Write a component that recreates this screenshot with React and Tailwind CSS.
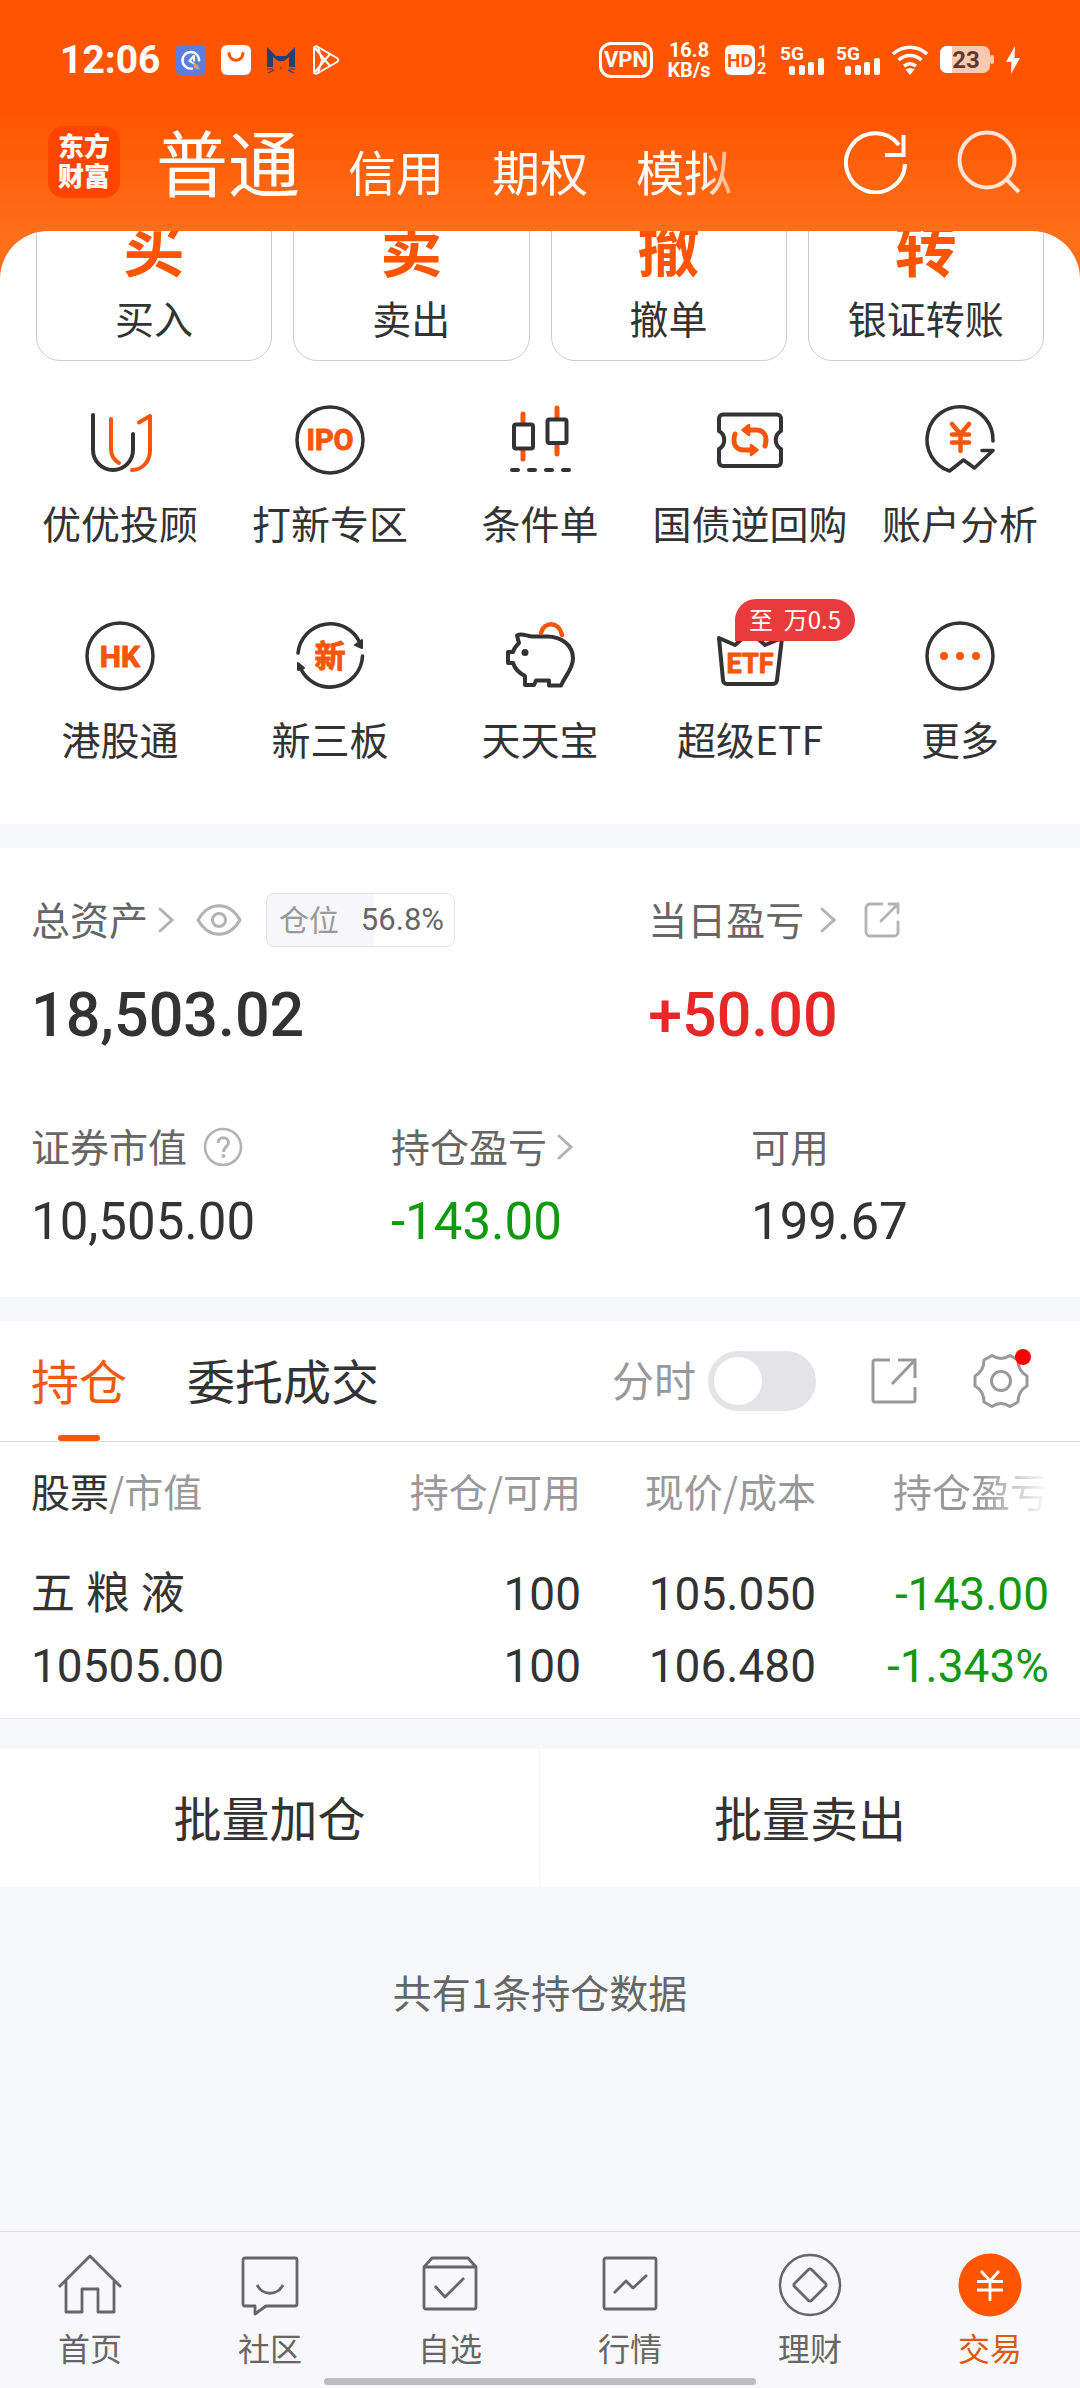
import { useState } from "react";
import clsx from "clsx";

const DARK = "#333333";
const ORANGE = "#f9560a";

const MODES = ["信用", "期权", "模拟"];

const ACTIONS = [
  { glyph: "买", label: "买入" },
  { glyph: "卖", label: "卖出" },
  { glyph: "撤", label: "撤单" },
  { glyph: "转", label: "银证转账" },
];

const POSITIONS = [
  {
    name: "五 粮 液",
    value: "10505.00",
    held: "100",
    usable: "100",
    price: "105.050",
    cost: "106.480",
    profit: "-143.00",
    rate: "-1.343%",
  },
];

/* ---------- status bar ---------- */

const Signal = () => (
  <svg className="h-8 w-11 overflow-visible" viewBox="0 0 44 32" fill="#fff">
    <text x="0" y="16" fontSize="19" fontWeight="700">5G</text>
    <rect x="9" y="22" width="6" height="9" rx="2" />
    <rect x="19" y="21" width="6" height="10" rx="2" />
    <rect x="28" y="18" width="6" height="13" rx="2" />
    <rect x="38" y="14" width="6" height="17" rx="2" />
  </svg>
);

const StatusBar = () => (
  <div className="flex h-[119px] items-center justify-between px-[60px] font-[Roboto] text-white">
    <div className="flex items-center gap-[15px]">
      <span className="text-[39px] leading-[48px] font-bold">12:06</span>
      <svg className="h-[30px] w-[30px]" viewBox="0 0 30 30" fill="none">
        <rect width="30" height="30" rx="5" fill="#5b7fe0" />
        <path d="M17 23.300a8.300 8.300 0 1 1 6-7" stroke="#fff" strokeWidth="2.400" />
        <path d="M18 10.500l-4.500 5.500 5 3M18 10.500v6" stroke="#fff" strokeWidth="2" />
        <path d="M17 18l5 2 1.500 4.500-5-1.500z" fill="#d9a066" />
      </svg>
      <svg className="h-[30px] w-[30px]" viewBox="0 0 30 30" fill="none">
        <rect width="30" height="30" rx="6" fill="#fff" />
        <path d="M8 8.500c1 9 13 9 14 0" stroke="#ff5500" strokeWidth="3" strokeLinecap="round" />
      </svg>
      <svg className="h-[30px] w-[30px]" viewBox="0 0 30 30" fill="#27406f">
        <path d="M1 2l9 9h10l9-9v20h-6V12l-5 4h-6l-5-4v10H1z" />
        <path d="M1 24h6M2 28l6-3M29 24h-6M28 28l-6-3M14 23h2" stroke="#27406f" strokeWidth="1.200" />
      </svg>
      <svg className="h-[30px] w-[30px]" viewBox="0 0 30 30" fill="none" stroke="#fff" strokeWidth="2" strokeLinejoin="round">
        <path d="M3 2.500v25q1 2 4 0.500l19-11q2.500-2 0-4L7 2q-3-1.500-4 0.500z" />
        <path d="M4 3l15 18M4 27L19 9M7 2l4 13-4 13" />
      </svg>
    </div>
    <div className="flex items-center gap-3">
      <span className="flex h-9 w-[54px] items-center justify-center rounded-xl border-3 border-white text-[22px] leading-6 font-bold">
        VPN
      </span>
      <span className="flex w-[48px] flex-col items-center text-[20px] leading-5 font-bold">
        <span>16.8</span>
        <span>KB/s</span>
      </span>
      <svg className="h-8 w-[43px] overflow-visible" viewBox="0 0 43 32" fill="#fff">
        <rect y="1" width="30" height="30" rx="6" />
        <text x="15" y="23" fontSize="19" fontWeight="700" textAnchor="middle" fill="#ff5500">HD</text>
        <text x="33" y="13" fontSize="16" fontWeight="700">1</text>
        <text x="32" y="30" fontSize="16" fontWeight="700">2</text>
      </svg>
      <Signal />
      <Signal />
      <svg className="h-8 w-9" viewBox="0 0 36 32" fill="none" stroke="#fff" strokeWidth="3.600">
        <path d="M1 10c10-9 24-9 34 0M6.500 16c7-6 16-6 23 0M12 22c4-3 8-3 12 0" />
        <path d="M13.500 25.500q4.500-3 9 0L18 31z" fill="#fff" stroke="none" />
      </svg>
      <svg className="h-7 w-[54px] overflow-visible" viewBox="0 0 54 28">
        <rect width="50" height="27" rx="7" fill="#ffc9b0" />
        <rect x="50" y="9" width="4" height="9" rx="2" fill="#ffc9b0" />
        <path d="M7 0h5v27H7a7 7 0 0 1-7-7V7a7 7 0 0 1 7-7z" fill="#fff" />
        <text x="26" y="22" fontSize="24" fontWeight="700" textAnchor="middle" fill="#5b3a2e">23</text>
      </svg>
      <svg className="h-7 w-3.5" viewBox="0 0 14 28" fill="#fff">
        <path d="M9 0L0 16h5.500L5 28l9-16H8.500z" />
      </svg>
    </div>
  </div>
);

/* ---------- shortcut icons, 72x72 ---------- */

const Shape = ({ children }) => (
  <svg
    className="h-[72px] w-[72px] overflow-visible"
    viewBox="0 0 72 72"
    fill="none"
    stroke={DARK}
    strokeWidth="4"
    strokeLinecap="round"
    strokeLinejoin="round"
  >
    {children}
  </svg>
);

const IconText = ({ y, size, children }) => (
  <text
    x="36"
    y={y}
    fontSize={size}
    fontWeight="700"
    textAnchor="middle"
    fill={ORANGE}
    stroke={ORANGE}
    strokeWidth="1"
    className="font-[Roboto,'Noto_Sans_CJK_SC',sans-serif]"
  >
    {children}
  </text>
);

const AdvisorIcon = () => (
  <Shape>
    <path d="M9 11v35a20 20 0 0 0 40 0V30" />
    <path d="M27 15v30c0 7 3 11 8 14M55 18.500L66 12v34c0 12-8 20-18 20" stroke={ORANGE} />
  </Shape>
);

const IpoIcon = () => (
  <Shape>
    <circle cx="36" cy="36" r="33" strokeWidth="3.500" />
    <IconText y="46" size="29">IPO</IconText>
  </Shape>
);

const CandleIcon = () => (
  <Shape>
    <path d="M19 10v8M19 46v9M53 4v9M53 41v9" stroke={ORANGE} strokeWidth="5" />
    <rect x="10" y="20.500" width="19" height="24" rx="2" />
    <rect x="43.500" y="15.500" width="19" height="23.500" rx="2" />
    <path d="M8 66h6M25 66h6M42 66h6M59 66h6" />
  </Shape>
);

const TreasuryIcon = () => (
  <Shape>
    <path d="M9 10.500h54a4 4 0 0 1 4 4V27c-7 4-7 14 0 18v13a4 4 0 0 1-4 4H9a4 4 0 0 1-4-4V45c7-4 7-14 0-18V14.500a4 4 0 0 1 4-4z" />
    <g stroke={ORANGE} strokeWidth="5">
      <path d="M36 26h6c8 0 12 6 9 16M36 46h-6c-8 0-12-6-9-16" />
      <path d="M35 21l-6.500 5 6.500 5zM37 41l6.500 5-6.500 5z" fill={ORANGE} strokeWidth="2.500" />
    </g>
  </Shape>
);

const AnalysisIcon = () => (
  <Shape>
    <path d="M69 37A33 33 0 1 0 25.500 67L39.500 56l11 8L69 46.500H58" strokeWidth="3.600" />
    <path d="M28 20l8.500 10L45 20M28 30.500h17M28 38.500h17M36.500 30v17" stroke={ORANGE} strokeWidth="4.500" />
  </Shape>
);

const HkIcon = () => (
  <Shape>
    <circle cx="36" cy="36" r="33" strokeWidth="3.500" />
    <IconText y="47" size="30">HK</IconText>
  </Shape>
);

const NewThirdIcon = () => (
  <Shape>
    <path d="M4 33A32.500 32.500 0 0 1 66 23M68.500 36A32.500 32.500 0 0 1 6 47" strokeWidth="3.600" />
    <path d="M61 25l7-5v8zM4 43v7l6-2z" fill={DARK} strokeWidth="2" />
    <IconText y="47" size="31">新</IconText>
  </Shape>
);

const PiggyIcon = () => (
  <Shape>
    <path d="M13 15.500c5-3 10 1 16 1h14c15 0 26 9 26 22 0 10-7 16-12 27H45v-5H32l-2 4.500h-9V56c-6-3-10-7-12-13H4V32h5c1-4 3-6 6-9z" />
    <path d="M37 13c3-12 18-12 21 2" stroke={ORANGE} strokeWidth="4.500" />
    <circle cx="21" cy="32.500" r="3.500" fill={DARK} stroke="none" />
  </Shape>
);

const EtfIcon = () => (
  <Shape>
    <path d="M5 18l16 7 15-13 15 13 17-7-5 42a4 4 0 0 1-4 4H13a4 4 0 0 1-4-4z" />
    <IconText y="53" size="27">ETF</IconText>
  </Shape>
);

const MoreIcon = () => (
  <Shape>
    <circle cx="36" cy="36" r="33" strokeWidth="3.500" />
    <g fill={ORANGE} stroke="none">
      <circle cx="20" cy="36" r="4" />
      <circle cx="36" cy="36" r="4" />
      <circle cx="52" cy="36" r="4" />
    </g>
  </Shape>
);

const SHORTCUTS = [
  { label: "优优投顾", Icon: AdvisorIcon },
  { label: "打新专区", Icon: IpoIcon },
  { label: "条件单", Icon: CandleIcon },
  { label: "国债逆回购", Icon: TreasuryIcon },
  { label: "账户分析", Icon: AnalysisIcon },
  { label: "港股通", Icon: HkIcon },
  { label: "新三板", Icon: NewThirdIcon },
  { label: "天天宝", Icon: PiggyIcon },
  { label: "超级ETF", Icon: EtfIcon, badge: "至  万0.5" },
  { label: "更多", Icon: MoreIcon },
];

/* ---------- small icons ---------- */

const Chevron = () => (
  <svg className="h-[26px] w-4" viewBox="0 0 16 26" fill="none" stroke="#b3b3b3" strokeWidth="3" strokeLinecap="round">
    <path d="M2 2l12 11L2 24" />
  </svg>
);

const EyeIcon = () => (
  <svg className="h-8 w-[46px]" viewBox="0 0 46 32" fill="none" stroke="#b3b3b3" strokeWidth="3">
    <path d="M2 16C13-3 33-3 44 16 33 35 13 35 2 16z" strokeLinejoin="round" />
    <circle cx="23" cy="16" r="6.500" />
  </svg>
);

const ShareIcon = () => (
  <svg className="h-9 w-9" viewBox="0 0 36 36" fill="none" stroke="#b3b3b3" strokeWidth="2.800" strokeLinecap="round">
    <path d="M18 2H6a4 4 0 0 0-4 4v24a4 4 0 0 0 4 4h24a4 4 0 0 0 4-4V20" />
    <path d="M25 2h9v9M33.500 2.500L17 19" />
  </svg>
);

const ExportIcon = () => (
  <svg className="h-12 w-12" viewBox="0 0 48 48" fill="none" stroke="#999" strokeWidth="3">
    <path d="M20 3H5a2 2 0 0 0-2 2v38a2 2 0 0 0 2 2h38a2 2 0 0 0 2-2V30M45 21V3H28" />
    <path d="M45 3L22 27" />
  </svg>
);

const GearIcon = () => (
  <svg className="h-14 w-14" viewBox="0 0 56 56" fill="none" stroke="#999" strokeWidth="3" strokeLinejoin="round">
    <path d="M19 2.500q9 6 18 0l8 4.500q0 11 9 16v10q-9 5-9 16l-8 4.500q-9-6-18 0l-8-4.500q0-11-9-16V23q9-5 9-16z" />
    <circle cx="28" cy="28" r="9.500" />
  </svg>
);

/* ---------- bottom tabs, 64x64 ---------- */

const NavShape = ({ children }) => (
  <svg
    className="h-16 w-16"
    viewBox="0 0 64 64"
    fill="none"
    stroke="#666"
    strokeWidth="2.800"
    strokeLinejoin="round"
  >
    {children}
  </svg>
);

const NAV = [
  {
    label: "首页",
    icon: <path d="M1 34L32 3l31 31M8 28v31h16V36h16v23h16V28" />,
  },
  {
    label: "社区",
    icon: (
      <>
        <path d="M7 5h50a2 2 0 0 1 2 2v44a2 2 0 0 1-2 2H28l-11 8v-8H7a2 2 0 0 1-2-2V7a2 2 0 0 1 2-2z" />
        <path d="M19 32c6 11 20 11 26 0" />
      </>
    ),
  },
  {
    label: "自选",
    icon: (
      <>
        <path d="M6 14v40a2 2 0 0 0 2 2h48a2 2 0 0 0 2-2V14l-8-9H14zM6 14h52" />
        <path d="M17 33l10 11 19-19" />
      </>
    ),
  },
  {
    label: "行情",
    icon: (
      <>
        <rect x="6" y="5" width="52" height="51" rx="2" />
        <path d="M16 40l12-12 7 7 14-13" />
      </>
    ),
  },
  {
    label: "理财",
    icon: (
      <>
        <circle cx="32" cy="32" r="30" strokeWidth="2.500" />
        <path d="M30.500 16.500a2 2 0 0 1 3 0l14 14a2 2 0 0 1 0 3l-14 14a2 2 0 0 1-3 0l-14-14a2 2 0 0 1 0-3z" />
      </>
    ),
  },
  {
    label: "交易",
    active: true,
    icon: (
      <>
        <circle cx="32" cy="32" r="31.500" fill="#ff5500" stroke="none" />
        <path d="M23 18l9 10 9-10M19 28.500h26M19 37h26M32 28v20" stroke="#fff" />
      </>
    ),
  },
];

/* ---------- sections ---------- */

const TopBar = () => (
  <header className="flex h-[90px] items-center pr-[60px] pl-12">
    <div className="mb-1 flex h-[72px] w-[72px] flex-col items-center justify-center rounded-2xl bg-[#ff4500] pb-1 text-[26px] leading-[30px] font-black text-white">
      <span>东方</span>
      <span>财富</span>
    </div>
    <nav className="ml-9 flex flex-1 items-baseline gap-12 overflow-hidden pb-2 text-white [mask-image:linear-gradient(to_right,black_calc(100%-54px),transparent)]">
      <button className="text-[72px] leading-[90px]">普通</button>
      {MODES.map((mode) => (
        <button key={mode} className="shrink-0 text-[48px] leading-[60px]">
          {mode}
        </button>
      ))}
    </nav>
    <div className="mb-1 ml-[88px] flex gap-12">
      <button aria-label="刷新">
        <svg className="h-16 w-16" viewBox="0 0 64 64" fill="none" stroke="#fff" strokeWidth="4">
          <path d="M61 34A29.500 29.500 0 1 1 55 15" />
          <path d="M59.500 5v20H41" />
        </svg>
      </button>
      <button aria-label="搜索">
        <svg className="h-16 w-16" viewBox="0 0 64 64" fill="none" stroke="#ffe3d3" strokeWidth="4">
          <circle cx="31" cy="30" r="27.500" />
          <path d="M50 49l13 13" />
        </svg>
      </button>
    </div>
  </header>
);

const Shortcuts = () => (
  <section className="mt-[22px] overflow-hidden rounded-t-[48px] bg-white pb-[62px]">
    {/* first row is scrolled partly under the header */}
    <div className="-mt-[60px] grid grid-cols-4 gap-[21px] px-9">
      {ACTIONS.map(({ glyph, label }) => (
        <button
          key={label}
          className="flex flex-col items-center gap-4 rounded-3xl border border-[#cccccc] pt-[41px] pb-[19px]"
        >
          <span className="text-[62px] leading-[64px] font-bold text-[#ff5500]">{glyph}</span>
          <span className="text-[39px] leading-[48px]">{label}</span>
        </button>
      ))}
    </div>
    <div className="mt-[43px] grid grid-cols-5 gap-y-[74px] px-[15px]">
      {SHORTCUTS.map(({ label, Icon, badge }) => (
        <button key={label} className="flex flex-col items-center gap-[22px]">
          <span className="relative">
            <Icon />
            {badge && (
              <span className="absolute -top-[21px] left-[21px] flex h-[42px] w-[120px] items-center justify-center rounded-full rounded-bl-none bg-[#e93b3b] pb-0.5 text-[24px] leading-[30px] whitespace-pre text-white">
                {badge}
              </span>
            )}
          </span>
          <span className="text-[39px] leading-[48px] whitespace-nowrap">{label}</span>
        </button>
      ))}
    </div>
  </section>
);

const Assets = () => (
  <section className="mt-6 bg-white py-[45px] text-[39px] leading-[48px] text-[#666666]">
    <div className="grid grid-cols-[4fr_3fr]">
      <div className="pl-[31px]">
        <div className="flex h-[54px] items-center">
          <span className="mr-2.5 pb-1">总资产</span>
          <Chevron />
          <button className="ml-[22px]" aria-label="隐藏金额">
            <EyeIcon />
          </button>
          <span className="ml-6 flex h-[54px] w-[189px] items-center justify-between rounded-lg border border-[#e4e4e7] bg-[linear-gradient(to_right,#f7f7fa_57%,white_57%)] pr-2.5 pl-3 text-[30px] leading-9">
            <span className="pb-1 text-[#999999]">仓位</span>
            <span className="font-[Roboto] text-[31px]">56.8%</span>
          </span>
        </div>
        <p className="mt-[32px] font-[Roboto] text-[61px] leading-[72px] font-medium text-[#333333]">18,503.02</p>
      </div>
      <div className="pl-[31px]">
        <div className="flex h-[54px] items-center">
          <span className="mr-4 pb-1">当日盈亏</span>
          <Chevron />
          <button className="ml-7" aria-label="分享">
            <ShareIcon />
          </button>
        </div>
        <p className="mt-[32px] font-[Roboto] text-[61px] leading-[72px] font-medium text-[#e62828]">+50.00</p>
      </div>
    </div>
    <div className="mt-[70px] grid grid-cols-3">
      <div className="pl-[31px]">
        <div className="flex items-center gap-4">
          <span className="pb-1">证券市值</span>
          <svg className="h-10 w-10" viewBox="0 0 40 40" fill="none" stroke="#b3b3b3" strokeWidth="2.600">
            <circle cx="20" cy="20" r="18" />
            <path d="M15 16c0-7 10.500-7 10.500-0.500 0 4-5 4.500-5 9.500" strokeWidth="3" />
            <circle cx="20.500" cy="29" r="2" fill="#b3b3b3" stroke="none" />
          </svg>
        </div>
        <p className="mt-[19px] font-[Roboto] text-[51px] leading-[60px] text-[#333333]">10,505.00</p>
      </div>
      <div className="pl-[31px]">
        <div className="flex items-center gap-2.5">
          <span className="pb-1">持仓盈亏</span>
          <Chevron />
        </div>
        <p className="mt-[19px] font-[Roboto] text-[51px] leading-[60px] text-[#0f990f]">-143.00</p>
      </div>
      <div className="pl-[31px]">
        <div className="pb-1">可用</div>
        <p className="mt-[19px] font-[Roboto] text-[51px] leading-[60px] text-[#333333]">199.67</p>
      </div>
    </div>
  </section>
);

const Holdings = () => {
  const [tab, setTab] = useState("持仓");
  const [minute, setMinute] = useState(false);

  return (
    <section className="mt-6 border-b border-[#e9e9ec] bg-white">
      <div className="flex h-[121px] items-center justify-between border-b border-[#dcdcdc] pr-[51px] pl-[31px]">
        <div className="flex h-full gap-[60px]">
          {["持仓", "委托成交"].map((name) => (
            <button
              key={name}
              onClick={() => setTab(name)}
              className={clsx(
                "relative h-full pb-1 text-[48px] leading-[60px]",
                tab === name ? "text-[#f05a10]" : "text-[#333333]"
              )}
            >
              {name}
              {tab === name && (
                <span className="absolute bottom-0 left-1/2 h-1.5 w-[42px] -translate-x-1/2 rounded-full bg-[#f9560a]" />
              )}
            </button>
          ))}
        </div>
        <div className="flex items-center">
          <label htmlFor="minute" className="pr-3 pb-1 text-[42px] leading-[48px] text-[#999999]">
            分时
          </label>
          <input
            id="minute"
            type="checkbox"
            checked={minute}
            onChange={(e) => setMinute(e.target.checked)}
            className="h-[60px] w-[108px] appearance-none rounded-full bg-[#e4e4e7] p-1.5 before:block before:h-12 before:w-12 before:rounded-full before:bg-white checked:bg-[#ff5500] checked:before:ml-12"
          />
          <button className="ml-[54px]" aria-label="导出">
            <ExportIcon />
          </button>
          <button className="relative ml-[55px]" aria-label="设置">
            <GearIcon />
            <span className="absolute -top-1 -right-0.5 h-4 w-4 rounded-full bg-[#ff0000]" />
          </button>
        </div>
      </div>
      <table className="w-full table-fixed text-right text-[46px] leading-[72px]">
        <thead>
          <tr className="h-[100px] text-[39px] leading-[48px] whitespace-nowrap text-[#999999]">
            <th className="pb-1 pl-[31px] text-left font-normal">
              <span className="text-[#333333]">股票</span>/市值
            </th>
            <th className="w-[214px] pb-1 font-normal">持仓/可用</th>
            <th className="w-[235px] pb-1 font-normal">现价/成本</th>
            <th className="w-[264px] pr-[31px] pb-1 font-normal">
              <span className="block [mask-image:linear-gradient(to_right,black_calc(100%-66px),transparent)]">
                持仓盈亏
              </span>
            </th>
          </tr>
        </thead>
        <tbody className="font-[Roboto,'Noto_Sans_CJK_SC',sans-serif]">
          {POSITIONS.map((p) => (
            <tr key={p.name}>
              <td className="py-4 pl-[31px] text-left">
                <div className="text-[44px]">{p.name}</div>
                <div>{p.value}</div>
              </td>
              <td className="py-4">
                <div>{p.held}</div>
                <div>{p.usable}</div>
              </td>
              <td className="py-4">
                <div>{p.price}</div>
                <div>{p.cost}</div>
              </td>
              <td className="py-4 pr-[31px] text-[#0f990f]">
                <div>{p.profit}</div>
                <div>{p.rate}</div>
              </td>
            </tr>
          ))}
        </tbody>
      </table>
    </section>
  );
};

const BottomNav = () => (
  <nav className="relative grid h-[157px] grid-cols-6 border-t border-[#dfe0e3] bg-[#f8f8fa] pt-[21px]">
    {NAV.map(({ label, icon, active }) => (
      <a
        key={label}
        href="#"
        className={clsx(
          "flex flex-col items-center gap-2.5 text-[32px] leading-10",
          active ? "text-[#d95b17]" : "text-[#666666]"
        )}
      >
        <NavShape>{icon}</NavShape>
        {label}
      </a>
    ))}
    <div className="absolute bottom-[3px] left-1/2 h-[7px] w-2/5 -translate-x-1/2 rounded-full bg-[#bdbdbd]" />
  </nav>
);

const App = () => (
  <div className="flex min-h-screen flex-col bg-[#f7f8fa] font-['Noto_Sans_CJK_SC',sans-serif] text-[#333333]">
    <div className="bg-[linear-gradient(to_bottom,#ff5500_110px,#ff6e18_230px)]">
      <StatusBar />
      <TopBar />
      <Shortcuts />
    </div>
    <Assets />
    <Holdings />
    <div className="mt-[30px] grid grid-cols-2 bg-white text-[48px] leading-[60px]">
      <button className="border-r border-[#f4f4f6] pt-[37px] pb-[41px]">批量加仓</button>
      <button className="pt-[37px] pb-[41px]">批量卖出</button>
    </div>
    <p className="mt-20 flex-1 text-center text-[39px] leading-[48px] text-[#666666]">
      共有1条持仓数据
    </p>
    <BottomNav />
  </div>
);

export default App;
